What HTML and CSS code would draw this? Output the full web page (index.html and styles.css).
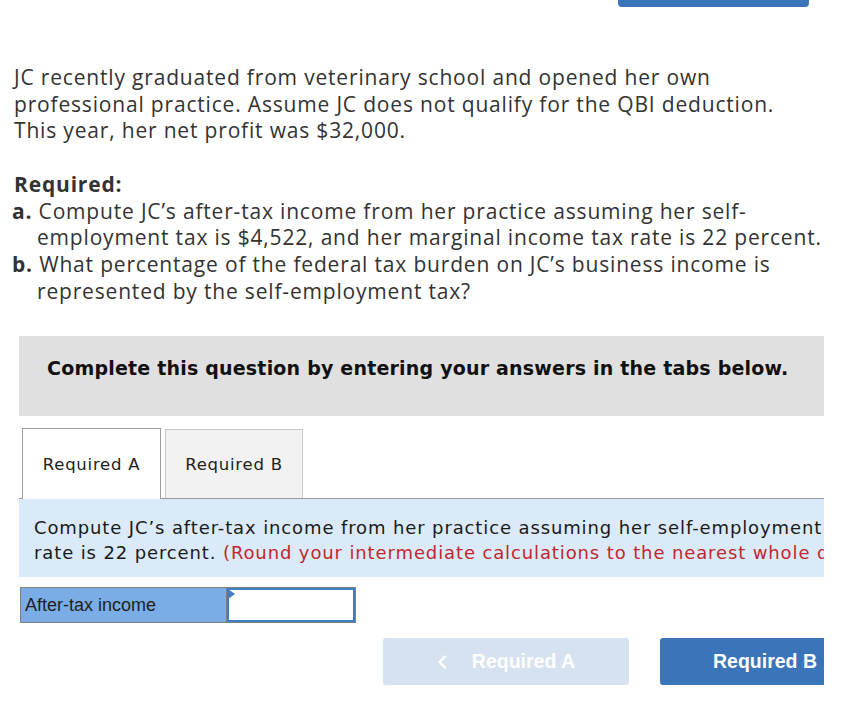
FILE: index.html
```html
<!DOCTYPE html>
<html lang="en">
<head>
<meta charset="utf-8">
<title>Question</title>
<link rel="stylesheet" href="styles.css">
</head>
<body>
<div class="topbar"><span class="top-btn"></span></div>

<div class="question">
  <p class="intro">JC recently graduated from veterinary school and opened her own professional practice. Assume JC does not qualify for the QBI deduction. This year, her net profit was $32,000.</p>
  <p class="req-title">Required:</p>
  <ol class="req-list">
    <li><b class="mark">a.</b> Compute JC’s after-tax income from her practice assuming her self-employment tax is $4,522, and her marginal income tax rate is 22 percent.</li>
    <li><b class="mark">b.</b> What percentage of the federal tax burden on JC’s business income is represented by the self-employment tax?</li>
  </ol>
</div>

<div class="work">
  <div class="notice">Complete this question by entering your answers in the tabs below.</div>

  <div class="tabs">
    <div class="tab active">Required A</div>
    <div class="tab">Required B</div>
  </div>

  <div class="panel">
    <p class="panel-text">Compute JC’s after-tax income from her practice assuming her self-employment tax is $4,522, and her marginal income tax rate is 22 percent. <span class="hint">(Round your intermediate calculations to the nearest whole dollar amount.)</span></p>
  </div>

  <div class="answer-row">
    <div class="label-cell">After-tax income</div>
    <div class="input-cell"><span class="field"><span class="flag"></span></span></div>
  </div>

  <div class="actions">
    <button class="nav prev"><svg class="chev" width="10" height="14" viewBox="0 0 10 14"><polyline points="8,1.5 2.5,7 8,12.5" fill="none" stroke="#fff" stroke-width="2.2" stroke-linecap="round" stroke-linejoin="round"/></svg><span>Required A</span></button>
    <button class="nav next">Required B</button>
  </div>
</div>
</body>
</html>
```

FILE: styles.css
```css
html, body {
  margin: 0;
  padding: 0;
  background: #fff;
}

body {
  width: 866px;
  height: 715px;
  overflow: hidden;
  color: #333;
  font-family: "Open Sans", "Lato", sans-serif;
}

.topbar {
  display: flex;
  justify-content: flex-end;
  padding-right: 57px;
  height: 7px;
}

.top-btn {
  display: block;
  width: 191px;
  height: 7px;
  background: #3a75b9;
  border-radius: 0 0 4px 4px;
}

.question {
  padding: 57px 0 0 14px;
  font-size: 21px;
  letter-spacing: 0.82px;
  line-height: 26.7px;
}

.intro {
  margin: 0;
  width: 775px;
}

.req-title {
  margin: 26.7px 0 0 0;
  font-weight: 700;
}

.req-list {
  list-style: none;
  margin: 0 0 0 -2px;
  padding: 0;
}

.req-list li {
  padding-left: 25px;
  text-indent: -25px;
  width: 818px;
  box-sizing: border-box;
}

.mark {
  font-weight: 700;
}

.work {
  margin: 32px 0 0 19px;
  width: 805px;
  overflow: hidden;
}

.notice {
  background: #e0e0e0;
  height: 80px;
  box-sizing: border-box;
  padding: 21px 0 0 28px;
  font-family: "DejaVu Sans", "Verdana", sans-serif;
  font-weight: 700;
  font-size: 19px;
  letter-spacing: 0.2px;
  line-height: 22px;
  color: #111;
  white-space: nowrap;
}

.tabs {
  display: flex;
  align-items: flex-end;
  gap: 4px;
  margin-top: 12px;
  padding-left: 3px;
  border-bottom: 1px solid #9a9a9a;
  height: 70px;
}

.tab {
  box-sizing: border-box;
  width: 138px;
  height: 69px;
  display: flex;
  align-items: center;
  justify-content: center;
  font-family: "DejaVu Sans", "Verdana", sans-serif;
  font-size: 16.5px;
  letter-spacing: 0.75px;
  color: #222;
  background: #f2f2f2;
  border: 1px solid #c9c9c9;
  border-bottom: none;
}

.tab.active {
  width: 139px;
  height: 71px;
  margin-bottom: -1px;
  background: #fff;
  border-color: #a0a0a0;
}

.panel {
  background: #dbeaf8;
  height: 78px;
  box-sizing: border-box;
  padding: 16px 0 0 15px;
}

.panel-text {
  margin: 0;
  width: 1262px;
  font-family: "DejaVu Sans", "Verdana", sans-serif;
  font-size: 18px;
  letter-spacing: 0.88px;
  line-height: 25px;
  color: #1a1a1a;
}

.hint {
  color: #c1272d;
}

.answer-row {
  display: flex;
  margin: 10px 0 0 1px;
  width: 336px;
  height: 36px;
  box-sizing: border-box;
  border: 1px solid #808080;
}

.label-cell {
  width: 206px;
  background: #7aade5;
  border-right: 1px solid #808080;
  font-family: "Liberation Sans", Arial, sans-serif;
  font-size: 18px;
  line-height: 34px;
  padding-left: 4px;
  box-sizing: border-box;
  color: #1f1f1f;
}

.input-cell {
  flex: 1;
  display: flex;
}

.field {
  position: relative;
  flex: 1;
  border: 2px solid #3f7cc2;
  background: #fff;
}

.flag {
  position: absolute;
  left: -1px;
  top: -1px;
  width: 0;
  height: 0;
  border-top: 5px solid transparent;
  border-bottom: 5px solid transparent;
  border-left: 7px solid #3f7cc2;
}

.actions {
  display: flex;
  gap: 31px;
  margin: 15px 0 0 364px;
  width: 600px;
}

.nav {
  height: 47px;
  border: none;
  border-radius: 3px;
  color: #fff;
  font-family: "Liberation Sans", Arial, sans-serif;
  font-weight: 700;
  font-size: 19.5px;
  display: flex;
  align-items: center;
  justify-content: center;
  padding: 0;
  flex: none;
}

.prev {
  width: 246px;
  background: #d6e2f0;
  gap: 25px;
}

.next {
  width: 210px;
  background: #3a75b9;
}

.chev {
  display: block;
}
```
